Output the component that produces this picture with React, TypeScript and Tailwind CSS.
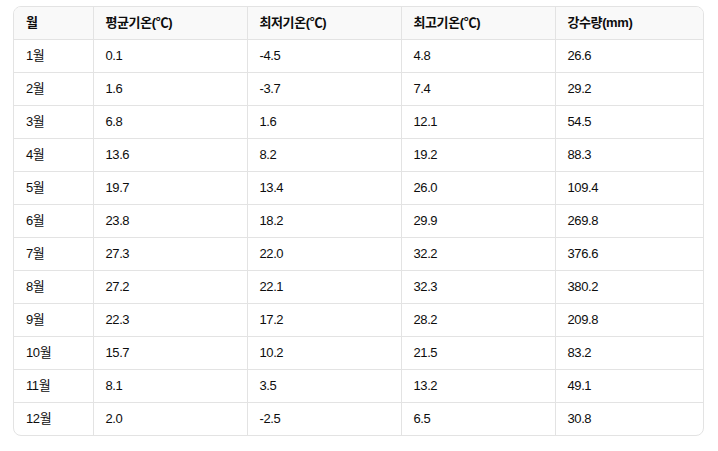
import React from 'react';

const rows = [
  ['1월', '0.1', '-4.5', '4.8', '26.6'],
  ['2월', '1.6', '-3.7', '7.4', '29.2'],
  ['3월', '6.8', '1.6', '12.1', '54.5'],
  ['4월', '13.6', '8.2', '19.2', '88.3'],
  ['5월', '19.7', '13.4', '26.0', '109.4'],
  ['6월', '23.8', '18.2', '29.9', '269.8'],
  ['7월', '27.3', '22.0', '32.2', '376.6'],
  ['8월', '27.2', '22.1', '32.3', '380.2'],
  ['9월', '22.3', '17.2', '28.2', '209.8'],
  ['10월', '15.7', '10.2', '21.5', '83.2'],
  ['11월', '8.1', '3.5', '13.2', '49.1'],
  ['12월', '2.0', '-2.5', '6.5', '30.8'],
];

const headers = ['월', '평균기온(℃)', '최저기온(℃)', '최고기온(℃)', '강수량(mm)'];
const widths = ['w-[79px]', 'w-[154px]', 'w-[154px]', 'w-[154px]', ''];

export default function App() {
  return (
    <div className="bg-white w-[718px] h-[451px] pl-[13px] pr-[14px] pt-[6px] text-[13px] text-[#0d0d0d] tracking-[-0.4px]" style={{ fontFamily: '"Liberation Sans", "Noto Sans CJK KR", sans-serif' }}>
      <div className="border border-[#e3e3e3] rounded-lg overflow-hidden">
        <table className="w-full border-collapse">
          <thead>
            <tr className="bg-[#f9f9f9] h-[32px]">
              {headers.map((h, i) => (
                <th key={h} className={`${widths[i]} text-left font-semibold px-[12px] border-b border-[#e3e3e3] ${i < 4 ? 'border-r' : ''}`}>
                  {h}
                </th>
              ))}
            </tr>
          </thead>
          <tbody>
            {rows.map((r, ri) => (
              <tr key={r[0]} className="h-[33px]">
                {r.map((c, ci) => (
                  <td key={ci} className={`px-[12px] border-[#e3e3e3] ${ri < rows.length - 1 ? 'border-b' : ''} ${ci < 4 ? 'border-r' : ''}`}>
                    {c}
                  </td>
                ))}
              </tr>
            ))}
          </tbody>
        </table>
      </div>
    </div>
  );
}
